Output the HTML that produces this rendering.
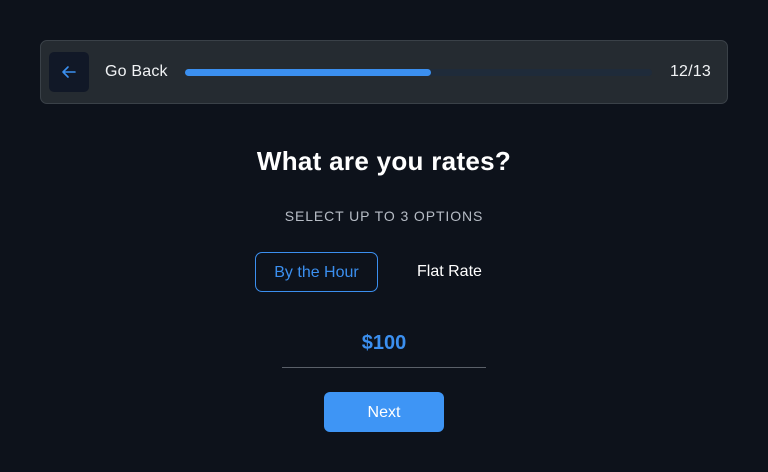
<!DOCTYPE html>
<html><head><style>
*{margin:0;padding:0;box-sizing:border-box}
body{width:768px;height:472px;background:#0d121b;font-family:"Liberation Sans",sans-serif;position:relative;overflow:hidden;color:#fff}
.bar{position:absolute;left:40px;top:40px;width:688px;height:64px;background:#252b31;border:1px solid #3a4148;border-radius:7px}
.back{position:absolute;left:8px;top:11px;width:40px;height:40px;background:#111827;border-radius:5px}
.gb{position:absolute;left:64px;top:22px;font-size:16px;color:#f1f3f5;letter-spacing:.2px}
.track{position:absolute;left:144px;top:28px;width:467px;height:7px;background:#1f2b3a;border-radius:4px}
.fill{width:246px;height:7px;background:#3b8fef;border-radius:4px}
.cnt{position:absolute;right:16px;top:22px;font-size:16px;color:#f1f3f5;letter-spacing:.2px}
h1{position:absolute;top:146px;width:768px;text-align:center;font-size:26px;font-weight:bold;letter-spacing:.3px}
.sub{position:absolute;top:208px;width:768px;text-align:center;font-size:14px;color:#b6bcc5;letter-spacing:.9px}
.opt1{position:absolute;left:255px;top:252px;width:123px;height:40px;border:1px solid #3b8fef;border-radius:7px;color:#3b8fef;font-size:16px;text-align:center;line-height:40px}
.opt2{position:absolute;left:417px;top:263px;font-size:16px;color:#fff}
.val{position:absolute;top:332px;width:768px;text-align:center;font-size:20px;font-weight:bold;color:#3b8fef}
.line{position:absolute;left:282px;top:367px;width:204px;height:1px;background:#5a6069}
.next{position:absolute;left:324px;top:392px;width:120px;height:40px;background:#3e95f5;border-radius:6px;font-size:16px;text-align:center;line-height:42px;color:#fff}
</style></head><body>
<div class="bar">
<div class="back"><svg width="40" height="40" viewBox="0 0 40 40"><path d="M26 20H14M19 15l-5 5 5 5" stroke="#3b8fef" stroke-width="1.6" fill="none" stroke-linecap="round" stroke-linejoin="round"/></svg></div>
<div class="gb">Go Back</div>
<div class="track"><div class="fill"></div></div>
<div class="cnt">12/13</div>
</div>
<h1>What are you rates?</h1>
<div class="sub">SELECT UP TO 3 OPTIONS</div>
<div class="opt1">By the Hour</div>
<div class="opt2">Flat Rate</div>
<div class="val">$100</div>
<div class="line"></div>
<div class="next">Next</div>
</body></html>
